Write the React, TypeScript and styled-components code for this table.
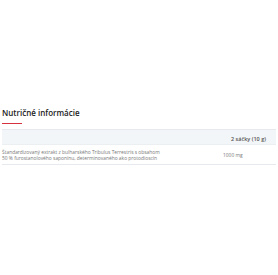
import styled, { createGlobalStyle } from 'styled-components';

const GlobalStyle = createGlobalStyle`
  body {
    margin: 0;
    background: #fff;
    font-family: 'Open Sans', 'Liberation Sans', sans-serif;
  }
`;

const Section = styled.section`
  padding: 108px 2px 0 2px;
`;

const Heading = styled.div`
  border-bottom: 1px solid #e6eaee;
  padding-bottom: 5px;
`;

const Title = styled.h2`
  margin: 0;
  font-size: 8px;
  line-height: 10px;
  font-weight: 600;
  color: #222;
`;

const Accent = styled.div`
  width: 20px;
  height: 1px;
  margin-top: 5px;
  background: #d5323e;
`;

const Table = styled.div`
  display: grid;
  grid-template-columns: 1fr 61px;
  font-size: 4.9px;
  color: #777;
`;

const HeadCell = styled.div<{ $pad?: number }>`
  background: #f3f6f9;
  height: 15px;
  padding: 6px 0 0 ${(p) => p.$pad ?? 0}px;
  box-sizing: border-box;
  font-size: 5.5px;
  font-weight: 600;
  color: #555;
  line-height: 6px;
  border-bottom: 1px solid #eceff2;
`;

const Cell = styled.div<{ $pad?: number; $center?: boolean }>`
  padding: 4px 0 3px ${(p) => p.$pad ?? 0}px;
  line-height: 6px;
  border-bottom: 1px solid #e6eaee;
  display: flex;
  align-items: ${(p) => (p.$center ? 'center' : 'flex-start')};
`;

const Desc = styled.span`
  max-width: 160px;
`;

export default function App() {
  return (
    <>
      <GlobalStyle />
      <Section>
        <Heading>
          <Title>Nutričné informácie</Title>
          <Accent />
        </Heading>
        <Table>
          <HeadCell />
          <HeadCell $pad={16}>2 sáčky (10 g)</HeadCell>
          <Cell>
            <Desc>
              Štandardizovaný extrakt z bulharského Tribulus Terrestris s obsahom 50 % furostanolového saponínu,
              determinovaného ako protodioscín
            </Desc>
          </Cell>
          <Cell $pad={8} $center>
            1000 mg
          </Cell>
        </Table>
      </Section>
    </>
  );
}
